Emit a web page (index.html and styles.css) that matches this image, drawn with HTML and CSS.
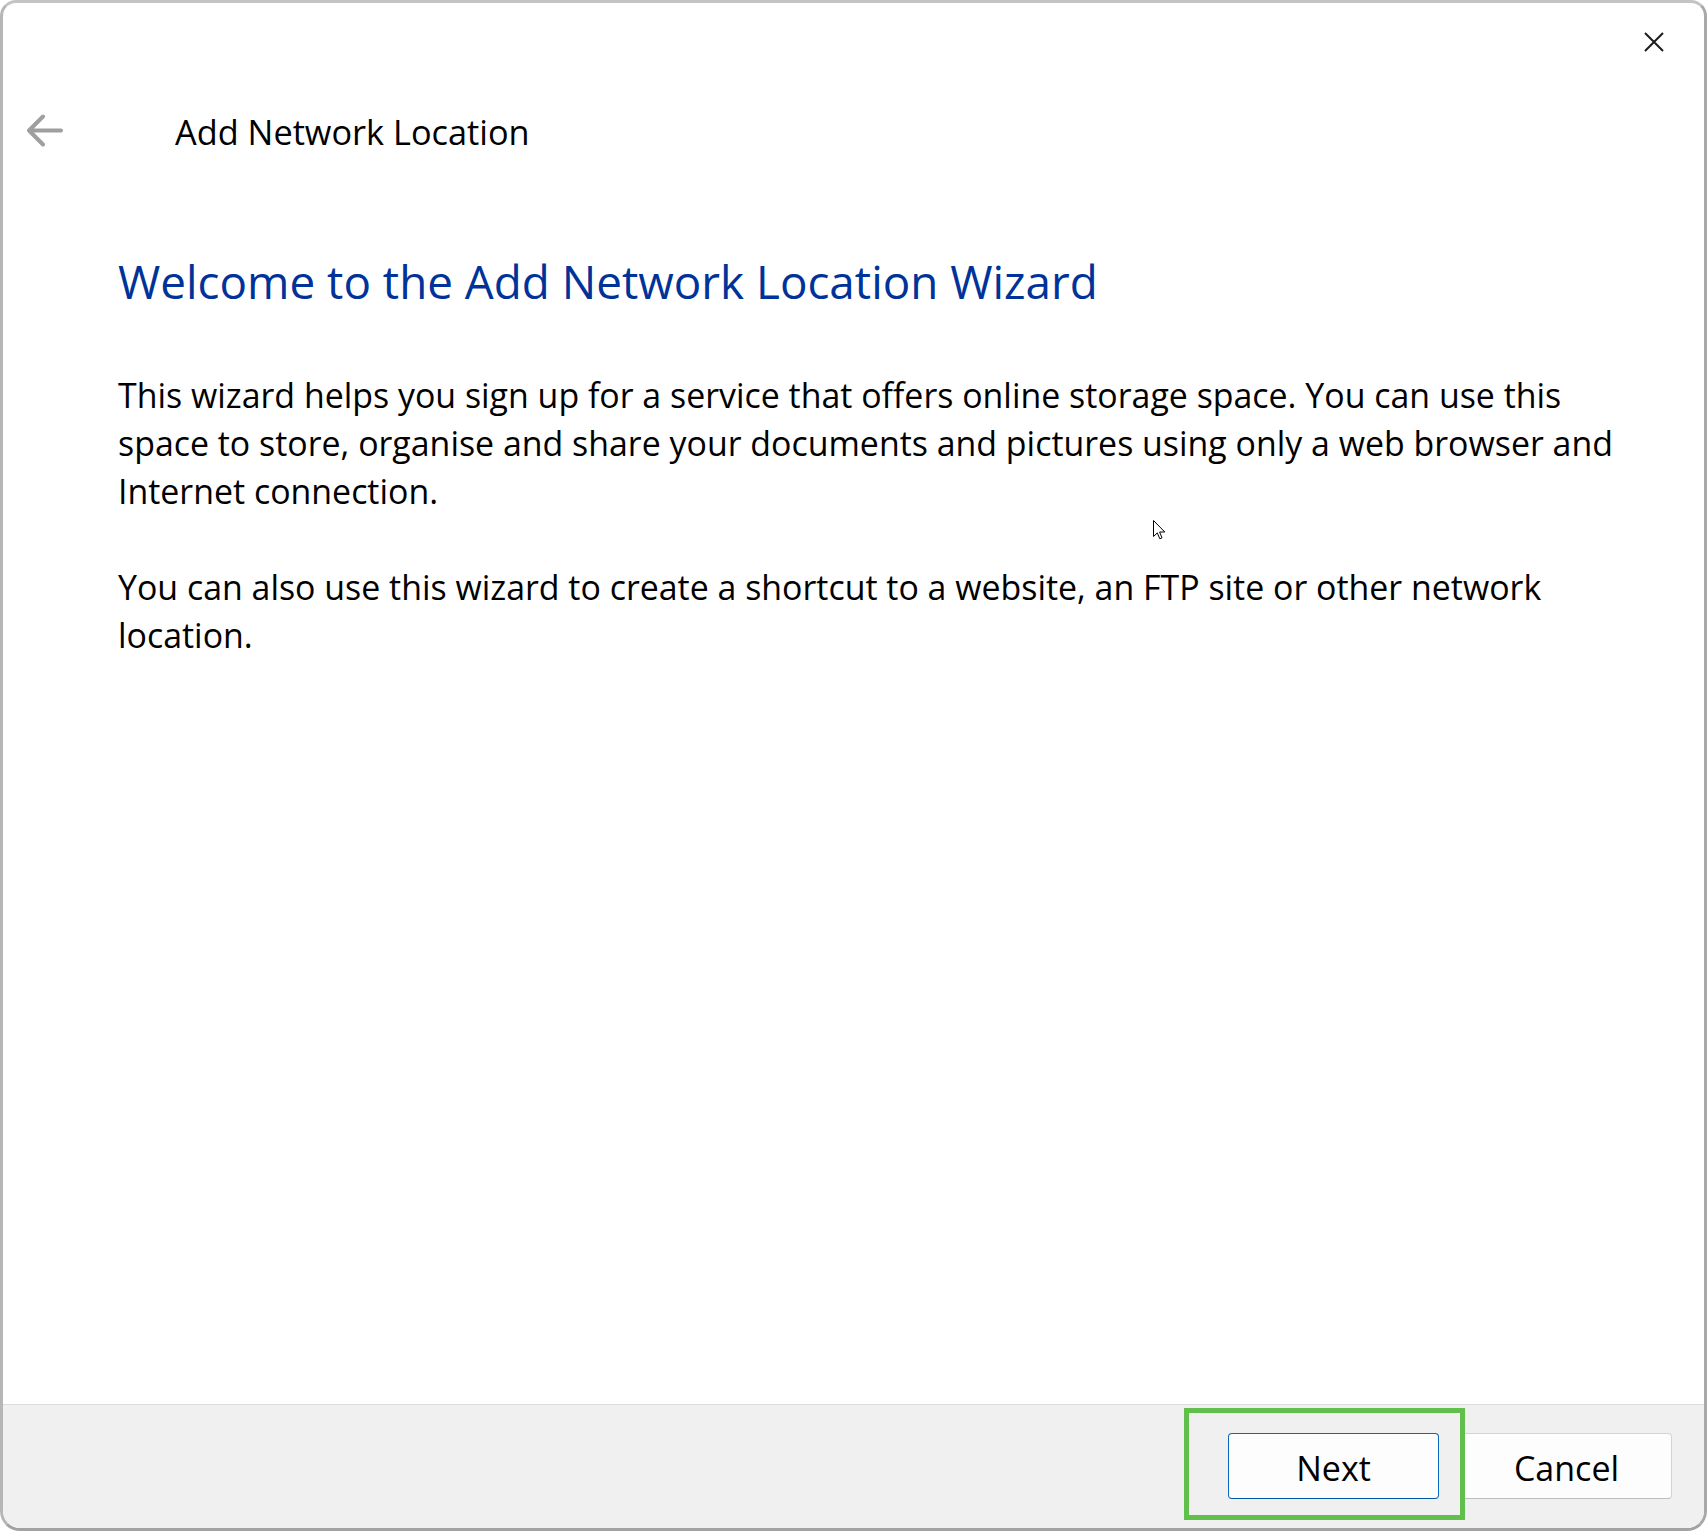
FILE: index.html
```html
<!DOCTYPE html>
<html lang="en">
<head>
    <meta charset="UTF-8">
    <meta name="viewport" content="width=device-width, initial-scale=1.0">
    <title>Add Network Location</title>
    <link rel="stylesheet" href="styles.css">
</head>
<body>
    <div class="window">
        <div class="titlebar">
            <button class="close" aria-label="Close">
                <svg width="20" height="20" viewBox="0 0 20 20"><path d="M1 1L19 19M19 1L1 19" stroke="#1c1c1c" stroke-width="2" fill="none"/></svg>
            </button>
        </div>
        <div class="nav">
            <svg class="back" width="36" height="33" viewBox="0 0 36 33"><path d="M34 16.5H2M16 2.5L2 16.5L16 30.5" stroke="#9f9f9f" stroke-width="4" stroke-linecap="round" stroke-linejoin="round" fill="none"/></svg>
            <h1 class="title">Add Network Location</h1>
        </div>
        <div class="content">
            <h2 class="heading">Welcome to the Add Network Location Wizard</h2>
            <p>This wizard helps you sign up for a service that offers online storage space. You can use this space to store, organise and share your documents and pictures using only a web browser and Internet connection.</p>
            <p>You can also use this wizard to create a shortcut to a website, an FTP site or other network location.</p>
        </div>
        <div class="footer">
            <button class="btn btn-next">Next</button>
            <button class="btn">Cancel</button>
        </div>
        <!-- highlight box and mouse pointer from the screenshot -->
        <div class="highlight"></div>
        <svg class="pointer" width="13" height="21" viewBox="0 0 13 21"><path d="M0.5 0.5V16.5L4.3 12.9L6.8 18.8L9 17.8L6.6 12H11.8Z" fill="#fff" stroke="#000" stroke-width="1"/></svg>
    </div>
</body>
</html>
```

FILE: styles.css
```css
html, body, h1, h2, p{
    margin: 0;
    padding: 0;
}
body{
    background: #fff;
    font-family: "Open Sans", "Noto Sans", "Liberation Sans", sans-serif;
    color: #000;
}
.window{
    position: relative;
    box-sizing: border-box;
    width: 1707px;
    height: 1531px;
    display: flex;
    flex-direction: column;
    background: #fff;
    border: 3px solid;
    border-color: #c4c4c4 #a9a9a9 #a2a2a2 #b6b6b6;
    border-radius: 16px 16px 20px 20px;
    overflow: hidden;
}
.titlebar{
    display: flex;
    justify-content: flex-end;
    padding: 29px 40px 0 0;
}
.close{
    display: block;
    width: 20px;
    height: 20px;
    padding: 0;
    border: 0;
    background: none;
}
.close svg{
    display: block;
}
.nav{
    display: flex;
    align-items: flex-start;
    margin-top: 57px;
    padding-left: 24px;
}
.back{
    display: block;
    margin-top: 5px;
}
.title{
    margin-left: 112px;
    font-size: 34.3px;
    line-height: 46px;
    font-weight: 400;
}
.content{
    flex: 1;
    padding-left: 115px;
}
.heading{
    margin-top: 96px;
    font-size: 45.8px;
    line-height: 60px;
    font-weight: 400;
    color: #003399;
}
.content p{
    max-width: 1520px;
    margin-top: 60px;
    font-size: 33.9px;
    line-height: 48px;
}
.content p + p{
    margin-top: 48px;
}
.footer{
    display: flex;
    justify-content: flex-end;
    gap: 22px;
    padding: 28px 32px 29px 0;
    background: #f0f0f0;
    border-top: 1px solid #dddddd;
}
.btn{
    width: 211px;
    height: 66px;
    padding: 3px 0 0;
    font-family: inherit;
    font-size: 34px;
    color: #000;
    background: #fdfdfd;
    border: 1px solid #d3d3d3;
    border-bottom-color: #bdbdbd;
    border-radius: 4px;
}
.btn-next{
    border: 1px solid #0a67c2;
    border-bottom-color: #0055a8;
}
.highlight{
    position: absolute;
    left: 1181px;
    top: 1405px;
    width: 281px;
    height: 112px;
    box-sizing: border-box;
    border: 5px solid #61c04b;
}
.pointer{
    position: absolute;
    left: 1150px;
    top: 517px;
}
```
